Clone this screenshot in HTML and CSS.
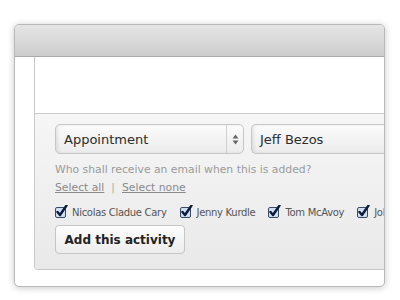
FILE: index.html
```html
<!DOCTYPE html>
<html>
<head>
<meta charset="utf-8">
<link rel="stylesheet" href="styles.css">
</head>
<body>
<div class="window">
  <div class="titlebar"></div>
  <div class="body">
    <div class="inner">
      <div class="top"></div>
      <div class="panel">
        <div class="selects">
          <div class="select type">
            <span class="value">Appointment</span>
            <span class="arrows">
              <svg width="7" height="11" viewBox="0 0 7 11"><path d="M3.5 0.5 L6.5 4.5 H0.5 Z M3.5 10.5 L6.5 6.5 H0.5 Z" fill="#666"/></svg>
            </span>
          </div>
          <div class="select person">
            <span class="value">Jeff Bezos</span>
          </div>
        </div>
        <p class="help">Who shall receive an email when this is added?</p>
        <p class="links"><a href="#">Select all</a><span class="sep">|</span><a href="#">Select none</a></p>
        <div class="people">
          <label class="person-check"><span class="cb"><svg width="14" height="14" viewBox="0 0 14 14"><rect x="0.5" y="2.5" width="10" height="10" rx="1.5" fill="#cfe0f3" stroke="#3a4a66"/><path d="M2.5 7 L5 10 L11.5 0.5" fill="none" stroke="#0d1b3a" stroke-width="2.4" stroke-linecap="round" stroke-linejoin="round"/></svg></span>Nicolas Cladue Cary</label>
          <label class="person-check"><span class="cb"><svg width="14" height="14" viewBox="0 0 14 14"><rect x="0.5" y="2.5" width="10" height="10" rx="1.5" fill="#cfe0f3" stroke="#3a4a66"/><path d="M2.5 7 L5 10 L11.5 0.5" fill="none" stroke="#0d1b3a" stroke-width="2.4" stroke-linecap="round" stroke-linejoin="round"/></svg></span>Jenny Kurdle</label>
          <label class="person-check"><span class="cb"><svg width="14" height="14" viewBox="0 0 14 14"><rect x="0.5" y="2.5" width="10" height="10" rx="1.5" fill="#cfe0f3" stroke="#3a4a66"/><path d="M2.5 7 L5 10 L11.5 0.5" fill="none" stroke="#0d1b3a" stroke-width="2.4" stroke-linecap="round" stroke-linejoin="round"/></svg></span>Tom McAvoy</label>
          <label class="person-check"><span class="cb"><svg width="14" height="14" viewBox="0 0 14 14"><rect x="0.5" y="2.5" width="10" height="10" rx="1.5" fill="#cfe0f3" stroke="#3a4a66"/><path d="M2.5 7 L5 10 L11.5 0.5" fill="none" stroke="#0d1b3a" stroke-width="2.4" stroke-linecap="round" stroke-linejoin="round"/></svg></span>John Smith</label>
        </div>
        <button class="add">Add this activity</button>
      </div>
    </div>
  </div>
</div>
</body>
</html>
```
FILE: styles.css
```css
html, body {
  margin: 0;
  padding: 0;
  background: #fff;
}
body {
  width: 400px;
  height: 300px;
  overflow: hidden;
  font-family: "DejaVu Sans", Verdana, sans-serif;
}
.window {
  margin: 24px 0 0 14px;
  width: 369px;
  height: 261px;
  border: 1px solid #b9b9b9;
  border-radius: 5px;
  box-shadow: 0 1px 7px rgba(0,0,0,0.22);
  background: #fff;
  overflow: hidden;
  display: flex;
  flex-direction: column;
}
.titlebar {
  height: 31px;
  flex: none;
  background: linear-gradient(#e5e5e5, #cdcdcd);
  border-bottom: 1px solid #a9a9a9;
}
.body {
  flex: 1;
  display: flex;
  padding: 0 0 16px 19px;
}
.inner {
  flex: 1;
  min-width: 0;
  display: flex;
  flex-direction: column;
  border-left: 1px solid #c9c9c9;
  border-bottom: 1px solid #c9c9c9;
  border-bottom-left-radius: 4px;
  overflow: hidden;
}
.top {
  height: 56px;
  flex: none;
  background: #fff;
  border-bottom: 1px solid #cbcbcb;
}
.panel {
  flex: 1;
  background: linear-gradient(#f6f6f6, #e9e9e9);
  padding: 10px 0 0 20px;
  overflow: hidden;
}
.selects {
  display: flex;
  gap: 7px;
  white-space: nowrap;
}
.select {
  border: 1px solid #c6c6c6;
  border-radius: 5px;
  background: linear-gradient(#fbfbfb, #ececec);
  box-shadow: inset 2px 0 3px rgba(0,0,0,0.08);
  display: flex;
  align-items: center;
  font-family: "Lucida Grande", "DejaVu Sans", sans-serif;
  font-size: 13px;
  color: #2c2c2c;
  box-sizing: border-box;
  height: 30px;
}
.select .value {
  padding-left: 8px;
  flex: 1;
}
.type {
  width: 189px;
  flex: none;
}
.arrows {
  width: 16px;
  height: 100%;
  border-left: 1px solid #cfcfcf;
  display: flex;
  align-items: center;
  justify-content: center;
}
.person {
  width: 160px;
  flex: none;
  border-right: none;
  border-radius: 5px 0 0 5px;
}
.help {
  margin: 9px 0 0 0;
  font-size: 10.8px;
  color: #9a9a9a;
  line-height: 13px;
  white-space: nowrap;
}
.links {
  margin: 5px 0 0 0;
  font-size: 10.8px;
  line-height: 13px;
  color: #aaa;
}
.links a {
  color: #8a8a8a;
  text-decoration: underline;
}
.sep {
  margin: 0 7px;
  color: #aaa;
}
.people {
  display: flex;
  margin-top: 11px;
  white-space: nowrap;
  gap: 13px;
}
.person-check {
  display: flex;
  align-items: center;
  font-size: 10px;
  letter-spacing: -0.3px;
  color: #555;
}
.cb {
  display: inline-flex;
  margin-right: 3px;
}
.add {
  margin-top: 6px;
  height: 29px;
  width: 130px;
  border: 1px solid #c4c4c4;
  border-radius: 4px;
  background: linear-gradient(#fdfdfd, #ececec);
  font-family: "DejaVu Sans", sans-serif;
  font-weight: bold;
  font-size: 12px;
  color: #222;
  padding: 0;
}
```
